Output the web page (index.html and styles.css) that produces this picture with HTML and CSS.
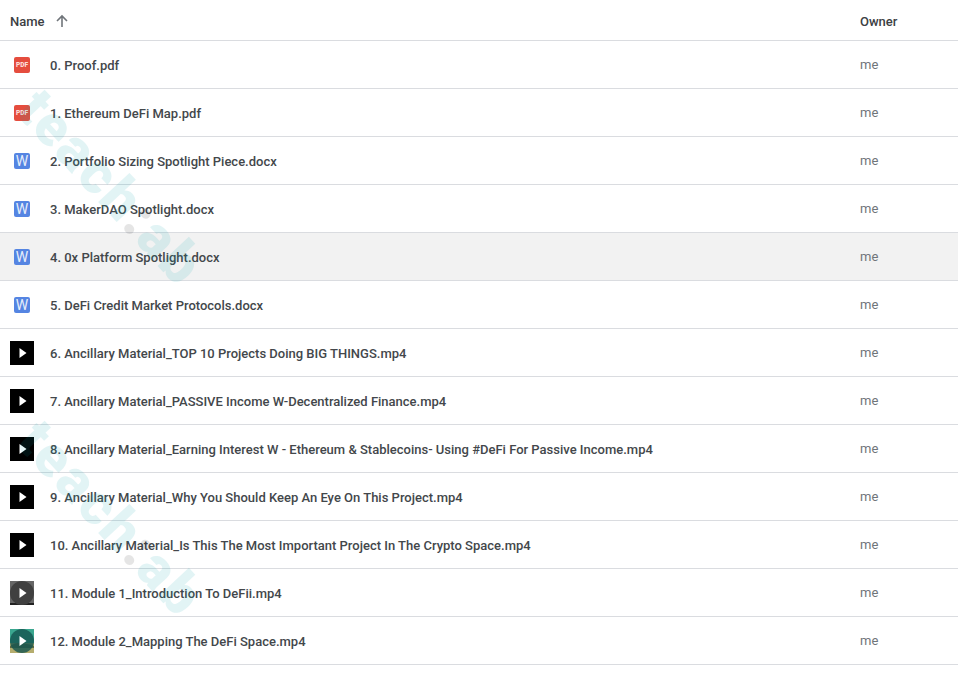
FILE: index.html
```html
<!DOCTYPE html>
<html lang="en">
<head>
<meta charset="utf-8">
<title>Files</title>
<link rel="stylesheet" href="styles.css">
</head>
<body>
<div class="list">
  <div class="head">
    <div class="name-col"><span class="h-name">Name</span>
      <svg class="arrow" width="16" height="16" viewBox="0 0 16 16"><path d="M8 14V3M3 8l5-5 5 5" fill="none" stroke="#70757a" stroke-width="1.6"/></svg>
    </div>
    <div class="owner-col h-owner">Owner</div>
  </div>

  <div class="row"><span class="ico"><span class="ti pdf">PDF</span></span><span class="fname">0. Proof.pdf</span><span class="owner-col me">me</span></div>
  <div class="row"><span class="ico"><span class="ti pdf">PDF</span></span><span class="fname">1. Ethereum DeFi Map.pdf</span><span class="owner-col me">me</span></div>
  <div class="row"><span class="ico"><span class="ti doc">W</span></span><span class="fname">2. Portfolio Sizing Spotlight Piece.docx</span><span class="owner-col me">me</span></div>
  <div class="row"><span class="ico"><span class="ti doc">W</span></span><span class="fname">3. MakerDAO Spotlight.docx</span><span class="owner-col me">me</span></div>
  <div class="row hover"><span class="ico"><span class="ti doc">W</span></span><span class="fname">4. 0x Platform Spotlight.docx</span><span class="owner-col me">me</span></div>
  <div class="row"><span class="ico"><span class="ti doc">W</span></span><span class="fname">5. DeFi Credit Market Protocols.docx</span><span class="owner-col me">me</span></div>
  <div class="row"><span class="ico"><span class="vid"><svg width="24" height="24" viewBox="0 0 24 24"><path d="M9.5 7v10l7-5z" fill="#fff"/></svg></span></span><span class="fname">6. Ancillary Material_TOP 10 Projects Doing BIG THINGS.mp4</span><span class="owner-col me">me</span></div>
  <div class="row"><span class="ico"><span class="vid"><svg width="24" height="24" viewBox="0 0 24 24"><path d="M9.5 7v10l7-5z" fill="#fff"/></svg></span></span><span class="fname">7. Ancillary Material_PASSIVE Income W-Decentralized Finance.mp4</span><span class="owner-col me">me</span></div>
  <div class="row"><span class="ico"><span class="vid"><svg width="24" height="24" viewBox="0 0 24 24"><path d="M9.5 7v10l7-5z" fill="#fff"/></svg></span></span><span class="fname">8. Ancillary Material_Earning Interest W - Ethereum &amp; Stablecoins- Using #DeFi For Passive Income.mp4</span><span class="owner-col me">me</span></div>
  <div class="row"><span class="ico"><span class="vid"><svg width="24" height="24" viewBox="0 0 24 24"><path d="M9.5 7v10l7-5z" fill="#fff"/></svg></span></span><span class="fname">9. Ancillary Material_Why You Should Keep An Eye On This Project.mp4</span><span class="owner-col me">me</span></div>
  <div class="row"><span class="ico"><span class="vid"><svg width="24" height="24" viewBox="0 0 24 24"><path d="M9.5 7v10l7-5z" fill="#fff"/></svg></span></span><span class="fname">10. Ancillary Material_Is This The Most Important Project In The Crypto Space.mp4</span><span class="owner-col me">me</span></div>
  <div class="row"><span class="ico"><span class="vid"><svg width="24" height="24" viewBox="0 0 24 24"><rect width="24" height="24" fill="#666"/><rect y="22" width="24" height="2" fill="#222"/><circle cx="12" cy="12" r="12" fill="#404040"/><path d="M9.5 7v10l7-5z" fill="#fff"/></svg></span></span><span class="fname">11. Module 1_Introduction To DeFii.mp4</span><span class="owner-col me">me</span></div>
  <div class="row"><span class="ico"><span class="vid"><svg width="24" height="24" viewBox="0 0 24 24"><rect width="24" height="24" fill="#3aa68f"/><rect y="14" width="24" height="10" fill="#b5ad6e"/><path d="M0 17q6-4 12-3t12 3v2H0z" fill="#5f6b45"/><circle cx="12" cy="12" r="12" fill="#14544f" fill-opacity=".8"/><path d="M9.5 7v10l7-5z" fill="#fff"/></svg></span></span><span class="fname">12. Module 2_Mapping The DeFi Space.mp4</span><span class="owner-col me">me</span></div>

  <div class="mark mark-a">teach<i>:</i>ab</div>
  <div class="mark mark-b">teach<i>:</i>ab</div>
</div>
</body>
</html>
```
FILE: styles.css
```css
html, body { margin: 0; padding: 0; background: #fff; }
body { font-family: Roboto, "Liberation Sans", sans-serif; font-size: 13px; width: 958px; height: 686px; overflow: hidden; }
.list { position: relative; }
.head { display: flex; align-items: center; height: 40px; border-bottom: 1px solid #dadce0; }
.name-col { flex: 1; display: flex; align-items: center; gap: 10px; padding-left: 10px; padding-top: 2px; }
.h-name { font-weight: 500; color: #3c4043; }
.arrow { display: block; margin-left: -1px; }
.owner-col { width: 98px; }
.h-owner { font-weight: 500; color: #3c4043; padding-top: 2px; }
.row { display: flex; align-items: center; height: 47px; border-bottom: 1px solid #dadce0; }
.row.hover { background: #f2f2f2; }
.ico { width: 50px; flex: none; display: flex; align-items: center; padding-left: 10px; box-sizing: border-box; }
.ti { width: 16px; height: 16px; margin-left: 4px; border-radius: 2px; display: flex; align-items: center; justify-content: center; }
.pdf { background: #e54d3e; font: 900 6.6px Roboto, sans-serif; color: #fbdcd8; }
.doc { background: #5585e2; font: 400 14px Roboto, sans-serif; color: #e8eefb; }
.vid { width: 24px; height: 24px; background: #000; display: block; overflow: hidden; }
.vid svg { display: block; }
.fname { flex: 1; font-weight: 500; color: #43474b; white-space: nowrap; padding-top: 2px; }
.me { color: #70757a; }
.mark { position: absolute; font: 900 57px Roboto, sans-serif; letter-spacing: 2.5px; color: #00a3ad; opacity: .11; transform: rotate(47deg); transform-origin: 0 0; white-space: nowrap; pointer-events: none; }
.mark i { font-style: normal; color: #222; }
.mark-a { top: 76px; left: 53px; }
.mark-b { top: 407px; left: 53px; }
```
